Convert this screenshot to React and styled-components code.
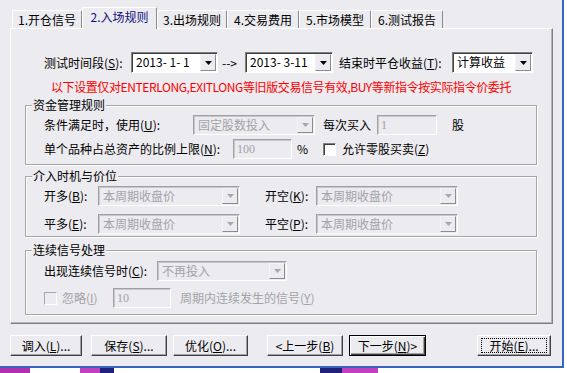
import React from 'react';
import styled, { createGlobalStyle } from 'styled-components';

const BG = '#ecebef';

const GlobalStyle = createGlobalStyle`
  html, body {
    margin: 0;
    padding: 0;
    background: #ffffff;
  }
  body {
    font-family: "Noto Sans CJK SC", "Noto Sans", sans-serif;
    font-size: 12px;
    color: #000;
  }
`;

const Screen = styled.div`
  width: 567px;
  height: 373px;
  overflow: hidden;
  display: flex;
  flex-direction: column;
`;

const Dialog = styled.div`
  width: 562px;
  height: 366px;
  flex: none;
  background: ${BG};
  border-right: 2px solid #3565c0;
  border-bottom: 2px solid #3565c0;
  display: flex;
  flex-direction: column;
`;

const BackStrip = styled.div`
  display: flex;
  height: 5px;
  background: #fff;
`;

const Chunk = styled.div`
  width: ${(p) => p.$w}px;
  background: ${(p) => p.$c};
`;

const TabRow = styled.div`
  display: flex;
  align-items: flex-end;
  height: 21px;
  margin-top: 7px;
  padding-left: 12px;
`;

const Tab = styled.div`
  width: ${(p) => p.$w}px;
  height: ${(p) => (p.$active ? 22 : 18)}px;
  margin-bottom: ${(p) => (p.$active ? -1 : 0)}px;
  position: relative;
  z-index: ${(p) => (p.$active ? 2 : 0)};
  box-sizing: border-box;
  display: flex;
  align-items: center;
  justify-content: center;
  padding-bottom: ${(p) => (p.$active ? 3 : 0)}px;
  background: ${BG};
  border-top: 1px solid #fff;
  border-left: 1px solid #fff;
  border-right: 1px solid #8a8a8a;
  border-radius: 2px 2px 0 0;
  color: ${(p) => (p.$active ? '#10107a' : '#000')};
  line-height: 14px;
  white-space: nowrap;
`;

const Panel = styled.div`
  margin-left: 10px;
  width: 543px;
  height: 296px;
  box-sizing: border-box;
  border-top: 1px solid #fff;
  border-left: 1px solid #fff;
  border-right: 1px solid #808080;
  border-bottom: 1px solid #808080;
  box-shadow: inset -1px -1px 0 #b4b4b8;
  padding: 0 15px 0 14px;
  display: flex;
  flex-direction: column;
`;

const Row = styled.div`
  display: flex;
  align-items: center;
  height: ${(p) => p.$h || 20}px;
  margin-top: ${(p) => p.$mt || 0}px;
  padding-left: ${(p) => p.$pl || 0}px;
  white-space: nowrap;
`;

const Label = styled.span`
  width: ${(p) => (p.$w ? `${p.$w}px` : 'auto')};
  flex: none;
  box-sizing: border-box;
  padding-left: ${(p) => p.$pl || 0}px;
  color: ${(p) => (p.$disabled ? '#a3a3a8' : '#000')};
  line-height: 14px;
  white-space: nowrap;
`;

const Key = styled.span`
  text-decoration: underline;
`;

const Note = styled.div`
  margin-top: 7px;
  line-height: 14px;
  text-align: center;
  color: #f00;
  letter-spacing: -0.4px;
  white-space: nowrap;
`;

const Group = styled.fieldset`
  margin: ${(p) => p.$mt}px 0 0;
  padding: ${(p) => p.$pt}px 0 ${(p) => p.$pb}px 18px;
  border: 1px solid #a6a6aa;
  box-shadow: inset 1px 1px 0 #fff, 1px 1px 0 #fff;
  min-width: 0;
`;

const Legend = styled.legend`
  margin-left: -12px;
  padding: 0 1px;
  line-height: 14px;
  background: ${BG};
`;

const ComboBox = styled.div`
  width: ${(p) => p.$w}px;
  height: ${(p) => p.$h || 20}px;
  flex: none;
  box-sizing: border-box;
  display: flex;
  border: 1px solid;
  border-color: ${(p) => (p.$disabled ? '#a0a0a4 #fff #fff #a0a0a4' : '#808080 #fff #fff #808080')};
  box-shadow: ${(p) => (p.$disabled ? 'inset 1px 1px 0 #c8c8cc' : 'inset 1px 1px 0 #404040')};
  background: ${(p) => (p.$disabled ? BG : '#fff')};
  padding: 1px 1px 1px 2px;
`;

const ComboText = styled.span`
  flex: 1;
  padding-left: 2px;
  line-height: 16px;
  color: ${(p) => (p.$disabled ? '#a3a3a8' : '#000')};
  overflow: hidden;
  white-space: pre;
  font-family: "Noto Sans CJK SC", "Liberation Sans", sans-serif;
`;

const ComboButton = styled.span`
  width: 16px;
  flex: none;
  box-sizing: border-box;
  display: flex;
  align-items: center;
  justify-content: center;
  background: ${BG};
  border: 1px solid;
  border-color: #f4f4f6 #8c8c90 #8c8c90 #f4f4f6;
`;

const TextBox = styled.div`
  width: ${(p) => p.$w}px;
  height: 20px;
  flex: none;
  box-sizing: border-box;
  border: 1px solid;
  border-color: #a0a0a4 #fff #fff #a0a0a4;
  box-shadow: inset 1px 1px 0 #c8c8cc;
  background: ${BG};
  color: #a3a3a8;
  padding-left: 3px;
  line-height: 18px;
  font-family: "Liberation Serif", serif;
`;

const Check = styled.span`
  width: 13px;
  height: 13px;
  flex: none;
  box-sizing: border-box;
  border: 1px solid;
  border-color: ${(p) => (p.$disabled ? '#a8a8ac #fff #fff #a8a8ac' : '#808080 #fff #fff #808080')};
  box-shadow: ${(p) => (p.$disabled ? 'none' : 'inset 1px 1px 0 #404040')};
  background: ${(p) => (p.$disabled ? BG : '#fff')};
`;

const ButtonRow = styled.div`
  display: flex;
  margin-top: 11px;
  padding-left: 10px;
`;

const Button = styled.div`
  width: ${(p) => p.$w}px;
  height: 21px;
  margin-left: ${(p) => p.$ml || 0}px;
  flex: none;
  box-sizing: border-box;
  display: flex;
  align-items: center;
  justify-content: center;
  background: ${BG};
  border: 1px solid;
  border-color: ${(p) => (p.$default ? '#000' : '#fff #404040 #404040 #fff')};
  box-shadow: ${(p) =>
    p.$default
      ? 'inset 1px 1px 0 #fff, inset -1px -1px 0 #404040, inset -2px -2px 0 #a0a0a4'
      : 'inset -1px -1px 0 #a0a0a4'};
  line-height: 14px;
  white-space: nowrap;
`;

const Focus = styled.span`
  width: 64px;
  height: 13px;
  box-sizing: border-box;
  display: flex;
  align-items: center;
  justify-content: center;
  outline: 1px dotted #000;
`;

const Arrow = ({ disabled }) => (
  <svg width="7" height="4" viewBox="0 0 7 4">
    <polygon points="0,0 7,0 3.5,4" fill={disabled ? '#a8a8ac' : '#000'} />
  </svg>
);

const Combo = ({ w, h, disabled, children }) => (
  <ComboBox $w={w} $h={h} $disabled={disabled}>
    <ComboText $disabled={disabled}>{children}</ComboText>
    <ComboButton>
      <Arrow disabled={disabled} />
    </ComboButton>
  </ComboBox>
);

const tabs = [
  { w: 70, text: '1.开仓信号' },
  { w: 75, text: '2.入场规则', active: true },
  { w: 70, text: '3.出场规则' },
  { w: 72, text: '4.交易费用' },
  { w: 72, text: '5.市场模型' },
  { w: 72, text: '6.测试报告' },
];

export default function App() {
  return (
    <Screen>
      <GlobalStyle />
      <Dialog>
        <TabRow>
          {tabs.map((t) => (
            <Tab key={t.text} $w={t.w} $active={t.active}>
              {t.text}
            </Tab>
          ))}
        </TabRow>
        <Panel>
          <Row $h={21} $mt={23} $pl={19}>
            <Label $w={87}>
              测试时间段(<Key>S</Key>):
            </Label>
            <Combo w={87} h={21}>2013- 1- 1</Combo>
            <Label $w={27} $pl={4}>
              --&gt;
            </Label>
            <Combo w={88} h={21}>2013- 3-11</Combo>
            <Label $w={119} $pl={6}>
              结束时平仓收益(<Key>T</Key>):
            </Label>
            <Combo w={81} h={21}>计算收益</Combo>
          </Row>

          <Note>以下设置仅对ENTERLONG,EXITLONG等旧版交易信号有效,BUY等新指令按实际指令价委托</Note>

          <Group $mt={4} $pt={3} $pb={5}>
            <Legend>资金管理规则</Legend>
            <Row>
              <Label $w={149}>
                条件满足时，使用(<Key>U</Key>):
              </Label>
              <Combo w={122} disabled>
                固定股数投入
              </Combo>
              <Label $w={62} $pl={8}>
                每次买入
              </Label>
              <TextBox $w={60}>1</TextBox>
              <Label $pl={15}>股</Label>
            </Row>
            <Row $mt={4}>
              <Label $w={189}>
                单个品种占总资产的比例上限(<Key>N</Key>):
              </Label>
              <TextBox $w={59}>100</TextBox>
              <Label $w={31} $pl={5}>
                %
              </Label>
              <Check />
              <Label $pl={6}>
                允许零股买卖(<Key>Z</Key>)
              </Label>
            </Row>
          </Group>

          <Group $mt={4} $pt={3} $pb={2}>
            <Legend>介入时机与价位</Legend>
            <Row>
              <Label $w={54}>
                开多(<Key>B</Key>):
              </Label>
              <Combo w={142} disabled>
                本周期收盘价
              </Combo>
              <Label $w={76} $pl={25}>
                开空(<Key>K</Key>):
              </Label>
              <Combo w={142} disabled>
                本周期收盘价
              </Combo>
            </Row>
            <Row $mt={8}>
              <Label $w={54}>
                平多(<Key>E</Key>):
              </Label>
              <Combo w={142} disabled>
                本周期收盘价
              </Combo>
              <Label $w={76} $pl={25}>
                平空(<Key>P</Key>):
              </Label>
              <Combo w={142} disabled>
                本周期收盘价
              </Combo>
            </Row>
          </Group>

          <Group $mt={6} $pt={4} $pb={6}>
            <Legend>连续信号处理</Legend>
            <Row>
              <Label $w={113}>
                出现连续信号时(<Key>C</Key>):
              </Label>
              <Combo w={130} disabled>
                不再投入
              </Combo>
            </Row>
            <Row $mt={7}>
              <Check $disabled />
              <Label $w={56} $pl={5} $disabled>
                忽略(<Key>I</Key>)
              </Label>
              <TextBox $w={58}>10</TextBox>
              <Label $pl={9} $disabled>
                周期内连续发生的信号(<Key>Y</Key>)
              </Label>
            </Row>
          </Group>
        </Panel>

        <ButtonRow>
          <Button $w={72}>
            调入(<Key>L</Key>)...
          </Button>
          <Button $w={76} $ml={9}>
            保存(<Key>S</Key>)...
          </Button>
          <Button $w={75} $ml={6}>
            优化(<Key>O</Key>)...
          </Button>
          <Button $w={76} $ml={19}>
            &lt;上一步(<Key>B</Key>)
          </Button>
          <Button $w={77} $ml={6} $default>
            下一步(<Key>N</Key>)&gt;
          </Button>
          <Button $w={74} $ml={51}>
            <Focus>
              开始(<Key>E</Key>)...
            </Focus>
          </Button>
        </ButtonRow>
      </Dialog>
      <BackStrip>
        <Chunk $w={30} $c="#b030b0" />
        <Chunk $w={50} $c="#ffffff" />
        <Chunk $w={20} $c="#c040c0" />
        <Chunk $w={14} $c="#20207a" />
        <Chunk $w={206} $c="#ffffff" />
        <Chunk $w={22} $c="#20207a" />
        <Chunk $w={36} $c="#c040c0" />
        <Chunk $w={189} $c="#ffffff" />
      </BackStrip>
    </Screen>
  );
}
